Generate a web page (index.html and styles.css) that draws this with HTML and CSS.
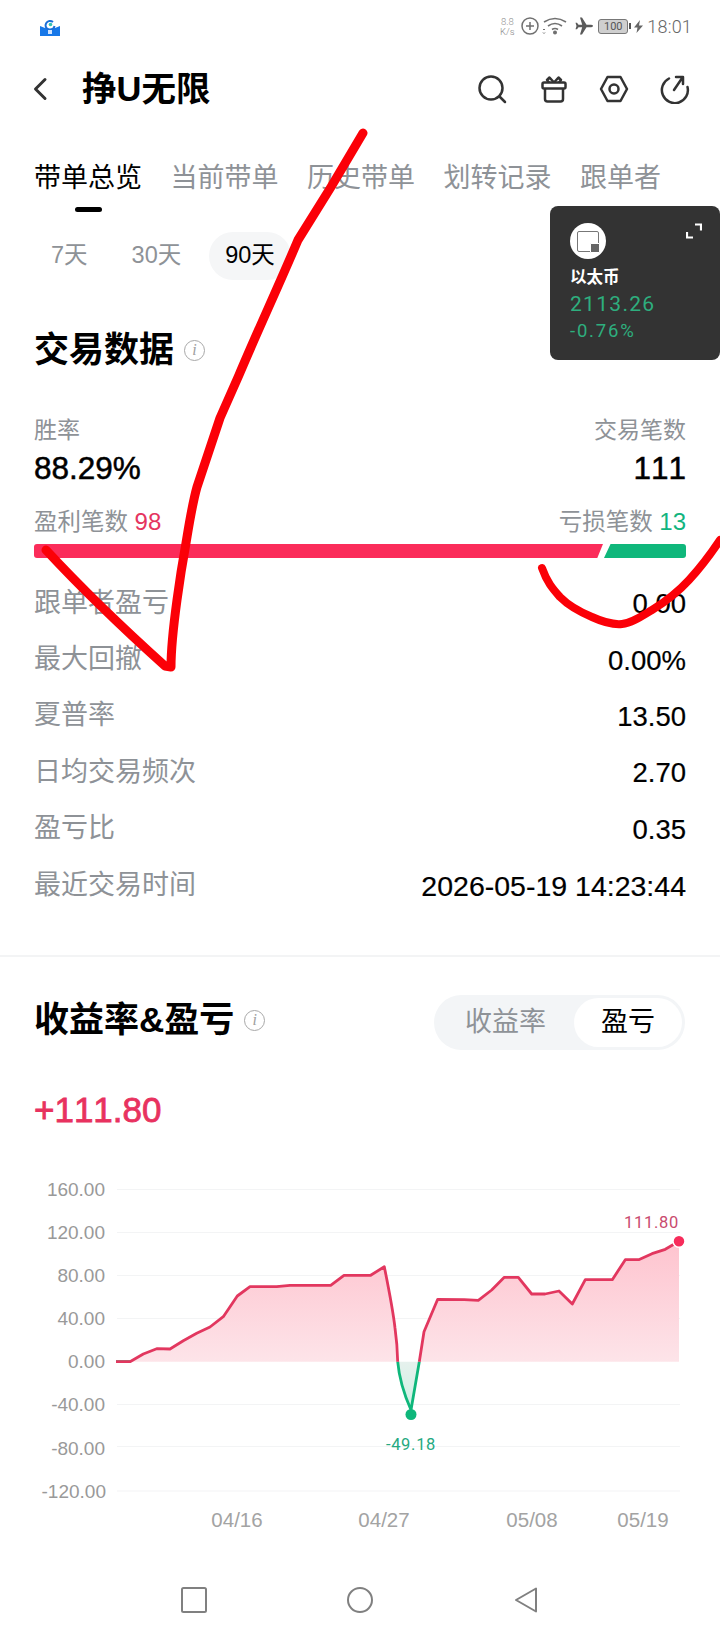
FILE: index.html
```html
<!DOCTYPE html>
<html lang="zh">
<head>
<meta charset="utf-8">
<title>挣U无限</title>
<link rel="stylesheet" href="styles.css">
</head>
<body>
<div class="page">
  <div class="status">
    <svg class="logo" width="20" height="17" viewBox="0 0 20 17">
      <path d="M0 7 Q10 12 20 7 V17 H0Z" fill="#1677e8"/>
      <path d="M13 3 A4.5 4.5 0 1 0 14.5 7" fill="none" stroke="#1a6fd8" stroke-width="2"/>
      <circle cx="10.5" cy="5.5" r="1.8" fill="#35c2b0"/>
      <rect x="8" y="11" width="4" height="4" fill="#cfe3ff"/>
    </svg>
    <div class="status-right">
      <div class="speed"><span>8.8</span><span>K/s</span></div>
      <svg width="18" height="18" viewBox="0 0 18 18" fill="none" stroke="#707070" stroke-width="1.5"><circle cx="9" cy="9" r="8"/><path d="M9 5v8M5 9h8"/></svg>
      <svg width="26" height="18" viewBox="0 0 26 18" fill="none" stroke="#707070" stroke-width="1.6"><path d="M3 5Q14-2 25 5M7 9Q14 4 21 9M11 12.500Q14 10.500 17 12.500"/><circle cx="14" cy="15.500" r="1.200" fill="#707070"/><path d="M2 13l1-1 1 1M2 15.500l1 1 1-1" stroke-width="1"/></svg>
      <svg class="plane" width="18" height="18" viewBox="0 0 18 18"><path d="M18 9 C18 8 16.500 7.800 15 7.800H11.500L7 0.500H5L7.200 7.800H3.500L2 5.800H0.500L1.500 9L0.500 12.200H2L3.500 10.200H7.200L5 17.500H7L11.500 10.200H15C16.500 10.200 18 10 18 9Z" fill="#5a5a5a"/></svg>
      <div class="battery"><span class="battery-level">100</span></div>
      <svg class="bolt" width="9" height="13" viewBox="0 0 9 13"><path d="M6 0L0 7.500H3.500L2.500 13L9 5.500H5Z" fill="#666"/></svg>
      <span class="time">18:01</span>
    </div>
  </div>

  <header class="header">
    <svg class="back" width="16" height="24" viewBox="0 0 16 24" fill="none" stroke="#333" stroke-width="3" stroke-linecap="round" stroke-linejoin="round"><path d="M13 2.500L3.500 12L13 21.500"/></svg>
    <h1 class="title">挣U无限</h1>
    <div class="actions">
      <svg class="search" width="30" height="30" viewBox="0 0 30 30" fill="none" stroke="#333" stroke-width="2.500" stroke-linecap="round"><circle cx="14" cy="14" r="11.500"/><path d="M23 23l5 5"/></svg>
      <svg width="28" height="28" viewBox="0 0 28 28" fill="none" stroke="#333" stroke-width="2.500" stroke-linejoin="round"><rect x="2.500" y="7.500" width="23" height="6" rx="1.500"/><path d="M5 13.500V24a2.500 2.500 0 0 0 2.500 2.500h13A2.500 2.500 0 0 0 23 24V13.500"/><path d="M14 7.500L9.500 2.500 7 5l2 2.500M14 7.500L18.500 2.500 21 5l-2 2.500"/></svg>
      <svg width="30" height="28" viewBox="0 0 30 28" fill="none" stroke="#333" stroke-width="2.500" stroke-linejoin="round"><path d="M8.500 2h13L28 14l-6.500 12h-13L2 14Z"/><circle cx="15" cy="14" r="4.500"/></svg>
      <svg width="30" height="30" viewBox="0 0 30 30" fill="none" stroke="#333" stroke-width="2.500" stroke-linecap="round" stroke-linejoin="round"><path d="M9 4.500A13 13 0 1 0 27.500 13"/><path d="M14 16L22.500 3.500M16 3h7v7"/></svg>
    </div>
  </header>

  <nav class="tabs">
    <div class="tab active">带单总览<i class="tab-mark"></i></div>
    <div class="tab">当前带单</div>
    <div class="tab">历史带单</div>
    <div class="tab">划转记录</div>
    <div class="tab">跟单者</div>
  </nav>

  <div class="pills">
    <span class="pill">7天</span>
    <span class="pill">30天</span>
    <span class="pill selected">90天</span>
  </div>

  <div class="section-head">
    <h2 class="section-title">交易数据</h2>
    <span class="info">i</span>
  </div>

  <div class="pair labels"><span>胜率</span><span>交易笔数</span></div>
  <div class="pair values"><span>88.29%</span><span>111</span></div>
  <div class="pair counts">
    <span>盈利笔数 <b class="up">98</b></span>
    <span>亏损笔数 <b class="down">13</b></span>
  </div>
  <div class="ratio"><i class="ratio-up"></i><i class="ratio-down"></i></div>

  <div class="rows">
    <div class="row"><span>跟单者盈亏</span><b>0.00</b></div>
    <div class="row"><span>最大回撤</span><b>0.00%</b></div>
    <div class="row"><span>夏普率</span><b>13.50</b></div>
    <div class="row"><span>日均交易频次</span><b>2.70</b></div>
    <div class="row"><span>盈亏比</span><b>0.35</b></div>
    <div class="row"><span>最近交易时间</span><b class="row-time">2026-05-19 14:23:44</b></div>
  </div>

  <div class="divider"></div>

  <div class="profit-head">
    <div class="section-head inline">
      <h2 class="section-title">收益率&amp;盈亏</h2>
      <span class="info">i</span>
    </div>
    <div class="toggle">
      <span class="toggle-item">收益率</span>
      <span class="toggle-item on">盈亏</span>
    </div>
  </div>

  <div class="amount">+111.80</div>

  <svg class="chart" width="720" height="370" viewBox="0 0 720 370">
    <defs>
      <linearGradient id="redFill" gradientUnits="userSpaceOnUse" x1="0" y1="70" x2="0" y2="192">
        <stop offset="0" stop-color="#fec3ce"/><stop offset="1" stop-color="#fde4e9"/>
      </linearGradient>
      <linearGradient id="greenFill" gradientUnits="userSpaceOnUse" x1="0" y1="192" x2="0" y2="240">
        <stop offset="0" stop-color="#e6f1ed"/><stop offset="1" stop-color="#cdf1e4"/>
      </linearGradient>
    </defs>
    <g class="grid">
      <path d="M117 19.500H680M117 62.500H680M117 105.500H680M117 148.500H680M117 234.500H680M117 276.500H680M117 321H680"/>
    </g>
    <g class="axis">
      <text x="105" y="26">160.00</text>
      <text x="105" y="69">120.00</text>
      <text x="105" y="112">80.00</text>
      <text x="105" y="155">40.00</text>
      <text x="105" y="198">0.00</text>
      <text x="105" y="241">-40.00</text>
      <text x="105" y="285">-80.00</text>
      <text x="106" y="328">-120.00</text>
    </g>
    <g class="dates">
      <text x="237" y="357">04/16</text>
      <text x="384" y="357">04/27</text>
      <text x="532" y="357">05/08</text>
      <text x="643" y="357">05/19</text>
    </g>
    <path fill="url(#redFill)" d="M130 191.700L143.300 184L156.700 178.700L170 179L183.300 170.700L196.700 163.300L210 157L223.300 146.700L237.300 126L250 116.700L276.700 116.700L290 115.300L330.700 115.300L344 105.300L370.700 105.300L384.300 96.700C389 120 393 140 395 158C397 172 397.500 182 397.700 191.700H419.300L424 161.700L437.700 129.300L464.300 129.700L478.300 130.300L491.700 120L504.300 107.300L518.300 107.300L531.700 124L545 124L559 121L572.300 134L585.300 109.700L612.300 109.700L625.300 89.700L638.700 89.700L652 83.700L665.300 79.300L679 71.300V191.700Z"/>
    <path fill="url(#greenFill)" d="M397.700 191.700C399 207 403 222 411 240L419.300 191.700Z"/>
    <path class="line-green" d="M116 191.700H130M397.700 191.700C399 207 403 222 411 240L419.300 191.700"/>
    <path class="line-red" d="M116 191.700H130L143.300 184L156.700 178.700L170 179L183.300 170.700L196.700 163.300L210 157L223.300 146.700L237.300 126L250 116.700L276.700 116.700L290 115.300L330.700 115.300L344 105.300L370.700 105.300L384.300 96.700C389 120 393 140 395 158C397 172 397.500 182 397.700 191.700M419.300 191.700L424 161.700L437.700 129.300L464.300 129.700L478.300 130.300L491.700 120L504.300 107.300L518.300 107.300L531.700 124L545 124L559 121L572.300 134L585.300 109.700L612.300 109.700L625.300 89.700L638.700 89.700L652 83.700L665.300 79.300L679 71.300"/>
    <circle cx="679" cy="71.300" r="6" fill="#f72c5b" stroke="#fff" stroke-width="1.500"/>
    <circle cx="411" cy="244.500" r="5.500" fill="#0fb77b"/>
    <text class="peak" x="679" y="58">111.80</text>
    <text class="trough" x="411" y="280">-49.18</text>
  </svg>

  <nav class="sysnav">
    <svg width="26" height="26" viewBox="0 0 26 26" fill="none" stroke="#808080" stroke-width="2" stroke-linejoin="round"><rect x="1" y="1" width="24" height="24" rx="1.500"/></svg>
    <svg width="26" height="26" viewBox="0 0 26 26" fill="none" stroke="#808080" stroke-width="2"><circle cx="13" cy="13" r="12"/></svg>
    <svg width="26" height="26" viewBox="0 0 26 26" fill="none" stroke="#808080" stroke-width="2" stroke-linejoin="round"><path d="M3 13L23 1.500V24.500Z"/></svg>
  </nav>

  <aside class="ticker">
    <div class="ticker-top">
      <span class="coin"><i class="coin-mark"></i></span>
      <svg width="16" height="16" viewBox="0 0 16 16" fill="none" stroke="#fff" stroke-width="2.200"><path d="M9 1.500H15V7.500M1 9V14.500H7"/></svg>
    </div>
    <div class="ticker-name">以太币</div>
    <div class="ticker-price">2113.26</div>
    <div class="ticker-change">-0.76%</div>
  </aside>

  <svg class="scribble" width="720" height="1640" viewBox="0 0 720 1640" fill="none" stroke="#fb0007" stroke-linecap="round" stroke-linejoin="round">
    <path stroke-width="9" d="M363 133L331 187L298 240C279 285 258 330 239 375L220 418L197 487C192 505 189 525 186 543C182 565 179 585 177 600C174 622 171 645 171 667L165 666C125 630 85 592 46 550"/>
    <path stroke-width="8" d="M542 568C547 582 552 588 560 597C570 607 580 612 592 617C603 622 612 625 622 624C632 623 642 616 652 610C665 602 678 592 689 580C700 568 710 555 720 540"/>
  </svg>
</div>
</body>
</html>
```
FILE: styles.css
```css
* { box-sizing: border-box; margin: 0; padding: 0; }
html, body { background: #fff; }
body { width: 720px; height: 1640px; overflow: hidden; }
.page {
  position: relative;
  width: 720px;
  height: 1640px;
  overflow: hidden;
  font-family: "Liberation Sans", "Noto Sans CJK SC", sans-serif;
  font-kerning: none;
  color: #000;
}
i { display: block; font-style: normal; }

.status { height: 50px; display: flex; align-items: flex-start; justify-content: space-between; padding: 17px 28px 0 40px; }
.logo { margin-top: 2px; }
.status-right { display: flex; align-items: center; height: 18px; }
.speed { display: flex; flex-direction: column; align-items: center; width: 20px; font-family: Roboto, sans-serif; font-size: 9.500px; line-height: 10.500px; color: #8a8a8a; font-weight: 300; margin-right: 2px; margin-top: 2px; }
.status-right > svg { flex: none; margin-left: 2px; }
.status-right > .plane { margin-left: 8px; }
.battery { position: relative; width: 30px; height: 15px; margin-left: 5px; border: 1.500px solid #777; border-radius: 3px; background: #cfcfcf; display: flex; align-items: center; justify-content: center; }
.battery::after { content: ""; position: absolute; right: -4px; top: 3px; width: 2px; height: 6px; background: #555; }
.battery-level { font-family: Roboto, sans-serif; font-size: 11px; color: #555; }
.status-right > .bolt { margin-left: 6px; }
.time { font-family: Roboto, sans-serif; font-weight: 300; font-size: 18px; color: #666; margin-left: 4px; letter-spacing: 0.200px; }

.header { height: 78px; display: flex; align-items: center; padding: 0 30px 0 32px; }
.back { flex: none; }
.title { font-size: 34.500px; font-weight: 700; line-height: 44px; margin-left: 34px; }
.actions { margin-left: auto; display: flex; align-items: center; gap: 31px; }
.actions > svg { flex: none; }
.actions > .search { margin-right: 2px; }

.tabs { display: flex; gap: 28.500px; padding: 32px 0 0 34px; }
.tab { display: flex; flex-direction: column; align-items: center; gap: 11px; font-size: 27px; line-height: 36px; color: #8e9297; white-space: nowrap; }
.tab.active { color: #000; }
.tab-mark { width: 27px; height: 5px; border-radius: 3px; background: #000; }

.pills { display: flex; gap: 12px; margin-top: 20px; padding-left: 35px; }
.pill { height: 48px; padding: 0 16px; border-radius: 24px; font-size: 23.500px; line-height: 46px; color: #8e9297; }
.pill.selected { background: #f5f6f7; color: #000; }

.section-head { display: flex; align-items: center; gap: 10px; height: 44px; margin-top: 48px; padding-left: 34px; }
.section-head.inline { margin-top: 0; padding-left: 0; padding-bottom: 5px; }
.section-title { font-size: 35px; line-height: 44px; font-weight: 700; }
.info { width: 21px; height: 21px; border: 1.500px solid #a8a8a8; border-radius: 50%; font-family: "Liberation Serif", serif; font-style: italic; font-size: 16px; line-height: 18px; text-align: center; color: #a0a0a0; }

.pair { display: flex; justify-content: space-between; padding: 0 34px; }
.labels { margin-top: 43px; height: 30px; font-size: 23px; line-height: 30px; color: #8e9297; }
.values { margin-top: 5px; height: 36px; font-weight: 400; font-size: 31.500px; line-height: 36px; -webkit-text-stroke: 0.500px #000; }
.counts { margin-top: 21px; height: 30px; font-size: 23.500px; line-height: 30px; color: #8e9297; }
.counts b { font-weight: 400; font-size: 24px; }
.up { color: #e5355f; }
.down { color: #12b47e; }

.ratio { display: flex; gap: 0; height: 14px; margin: 7px 34px 0; }
.ratio-up { flex: 0 0 569px; background: #fb2c5a; border-radius: 3px 0 0 3px; clip-path: polygon(0 0, 100% 0, 99% 100%, 0 100%); }
.ratio-down { flex: 1; margin-left: 1px; background: #0fb77b; border-radius: 0 3px 3px 0; clip-path: polygon(8% 0, 100% 0, 100% 100%, 0 100%); }

.rows { margin-top: 14px; padding: 0 34px; }
.row { display: flex; align-items: center; justify-content: space-between; height: 56.400px; font-size: 27px; color: #8e9297; }
.row b { font-weight: 400; font-size: 27.500px; color: #000; padding-top: 8px; -webkit-text-stroke: 0.200px #000; }
.row b.row-time { font-size: 28.500px; }

.divider { height: 2px; margin-top: 45px; background: #f3f4f5; }

.profit-head { display: flex; align-items: center; justify-content: space-between; height: 55px; margin-top: 38px; padding: 0 35px 0 34px; }
.toggle { display: flex; align-items: center; width: 251px; height: 55px; padding: 3px; border-radius: 28px; background: #f3f5f7; }
.toggle-item { flex: 1; text-align: center; font-size: 27px; line-height: 49px; color: #8e9297; }
.toggle-item.on { flex: 0 0 108px; background: #fff; border-radius: 25px; color: #000; }

.amount { margin-top: 40px; height: 41px; padding-left: 34px; font-weight: 400; font-size: 35px; line-height: 40px; color: #e8325f; -webkit-text-stroke: 0.800px #e8325f; }

.chart { display: block; margin-top: 39px; }
.grid path { fill: none; stroke: #f3f4f5; stroke-width: 1.200; }
.axis text { font-size: 19px; fill: #999; text-anchor: end; }
.dates text { font-size: 20.500px; fill: #a3a3a3; text-anchor: middle; }
.line-red, .line-green { fill: none; stroke-width: 2.800; stroke-linejoin: round; }
.line-red { stroke: #e2375f; }
.line-green { stroke: #0fb77b; }
.peak, .trough { font-family: Roboto, sans-serif; font-size: 16.500px; letter-spacing: 0.700px; }
.peak { fill: #c94a6e; text-anchor: end; }
.trough { fill: #25a981; text-anchor: middle; }

.sysnav { display: flex; justify-content: center; gap: 140px; padding-top: 47px; }

.ticker { position: absolute; left: 550px; top: 206px; width: 170px; height: 154px; padding: 17px 18px 0 20px; background: #333; border-radius: 8px; color: #fff; }
.ticker-top { display: flex; justify-content: space-between; align-items: flex-start; }
.coin { display: flex; align-items: center; justify-content: center; width: 36px; height: 36px; border-radius: 50%; background: #fff; }
.coin-mark { position: relative; width: 22px; height: 21px; border: 1.500px solid #777; border-radius: 2px; }
.coin-mark::after { content: ""; position: absolute; right: -2px; bottom: -2px; width: 8px; height: 8px; background: #666; border: 1px solid #fff; border-radius: 1px; }
.ticker-name { margin-top: 7px; font-size: 16.500px; line-height: 22px; font-weight: 700; }
.ticker-price { margin-top: 3px; font-family: Roboto, sans-serif; font-size: 21px; line-height: 26px; letter-spacing: 1.300px; color: #2eae7e; }
.ticker-change { margin-top: 2px; font-family: Roboto, sans-serif; font-size: 18.500px; line-height: 24px; letter-spacing: 1.800px; color: #2eae7e; }

.scribble { position: absolute; left: 0; top: 0; pointer-events: none; }
```
